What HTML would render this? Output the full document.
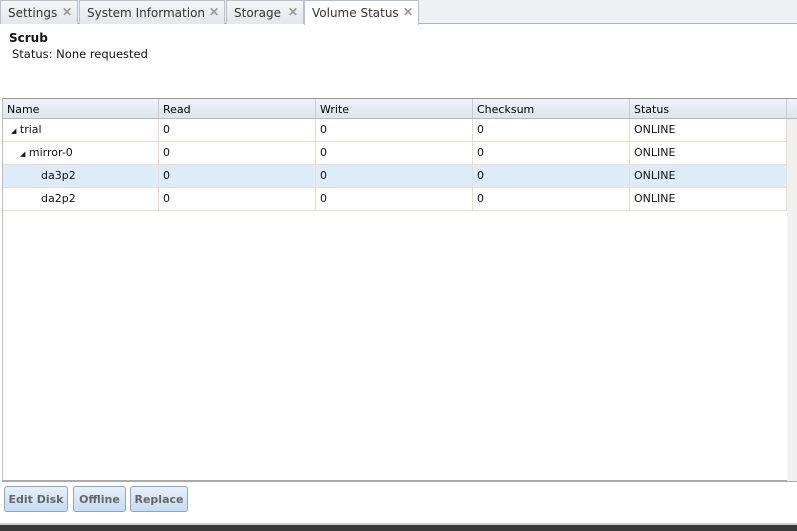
<!DOCTYPE html>
<html><head><style>
*{margin:0;padding:0;box-sizing:border-box}
body{width:797px;height:531px;overflow:hidden;background:#fff;font-family:"DejaVu Sans","Liberation Sans",sans-serif;font-size:11px;color:#000;position:relative}
.tabs{position:absolute;left:0;top:0;width:797px;height:24px;background:#eef0f3;border-bottom:1px solid #a9b4c2}
.tab{position:absolute;top:0;height:24px;border:1px solid #b8c0cc;border-bottom:none;background:linear-gradient(#f4f5f7,#e4e7eb);padding:5px 0 0 7px;color:#333;font-size:12px}
.tab.act{background:#fff;height:25px}
.tab .x{position:absolute;right:5px;top:4px;color:#999;font-weight:bold;font-size:12px;font-family:"Liberation Sans",sans-serif}
.scrub{position:absolute;left:9px;top:31px;font-weight:bold;font-size:12px;color:#111}
.stat{position:absolute;left:12px;top:47px;font-size:11.5px;color:#111}
.grid{position:absolute;left:2px;top:98px;width:795px;height:384px;border-top:1px solid #999;border-left:1px solid #bbb;border-bottom:2px solid #aaa}
.hdr{position:absolute;left:0;top:0;width:794px;height:20px;background:linear-gradient(#eef2f7,#dfe5ec);border-bottom:1px solid #b2b9c2}
.c{position:absolute;top:0;height:100%;padding:4px 0 0 4px;border-right:1px solid #c6ccd4}
.row{position:absolute;left:0;width:784px;height:23px;border-bottom:1px solid #ecdccc}
.row .c{border-right:1px solid #ecdccc;padding-top:4px;color:#111}
.sel{background:#ddecf9}
.sb{position:absolute;left:784px;top:20px;width:11px;height:362px;background:#f0f0f0}
.btn{position:absolute;top:486px;height:26px;border:1px solid #8aa6c4;border-radius:3px;background:linear-gradient(#e6f0fa,#c6dcf2);font-weight:bold;color:#666;font-size:11px;text-align:center;padding-top:6px}
.term{position:absolute;left:0;top:523px;width:797px;height:8px;background:#3a3a3a;border-top:2px solid #ccd}
</style></head><body>
<div class="tabs">
<div class="tab" style="left:0;width:78px">Settings<span class="x">✕</span></div>
<div class="tab" style="left:79px;width:146px">System Information<span class="x">✕</span></div>
<div class="tab" style="left:226px;width:78px">Storage<span class="x">✕</span></div>
<div class="tab act" style="left:304px;width:115px">Volume Status<span class="x">✕</span></div>
</div>
<div class="scrub">Scrub</div>
<div class="stat">Status: None requested</div>
<div class="grid">
<div class="hdr">
<div class="c" style="left:0;width:156px">Name</div>
<div class="c" style="left:156px;width:157px">Read</div>
<div class="c" style="left:313px;width:157px">Write</div>
<div class="c" style="left:470px;width:157px">Checksum</div>
<div class="c" style="left:627px;width:157px">Status</div>
</div>
<div class="row" style="top:20px"><div class="c" style="left:0;width:156px;padding-left:8px"><span style="font-size:7px">◢</span> trial</div><div class="c" style="left:156px;width:157px">0</div><div class="c" style="left:313px;width:157px">0</div><div class="c" style="left:470px;width:157px">0</div><div class="c" style="left:627px;width:157px">ONLINE</div></div>
<div class="row" style="top:43px"><div class="c" style="left:0;width:156px;padding-left:17px"><span style="font-size:7px">◢</span> mirror-0</div><div class="c" style="left:156px;width:157px">0</div><div class="c" style="left:313px;width:157px">0</div><div class="c" style="left:470px;width:157px">0</div><div class="c" style="left:627px;width:157px">ONLINE</div></div>
<div class="row sel" style="top:66px"><div class="c" style="left:0;width:156px;padding-left:38px">da3p2</div><div class="c" style="left:156px;width:157px">0</div><div class="c" style="left:313px;width:157px">0</div><div class="c" style="left:470px;width:157px">0</div><div class="c" style="left:627px;width:157px">ONLINE</div></div>
<div class="row" style="top:89px"><div class="c" style="left:0;width:156px;padding-left:38px">da2p2</div><div class="c" style="left:156px;width:157px">0</div><div class="c" style="left:313px;width:157px">0</div><div class="c" style="left:470px;width:157px">0</div><div class="c" style="left:627px;width:157px">ONLINE</div></div>
<div class="sb"></div>
</div>
<div class="btn" style="left:4px;width:64px">Edit Disk</div>
<div class="btn" style="left:73px;width:53px">Offline</div>
<div class="btn" style="left:130px;width:58px">Replace</div>
<div class="term"></div>
</body></html>
